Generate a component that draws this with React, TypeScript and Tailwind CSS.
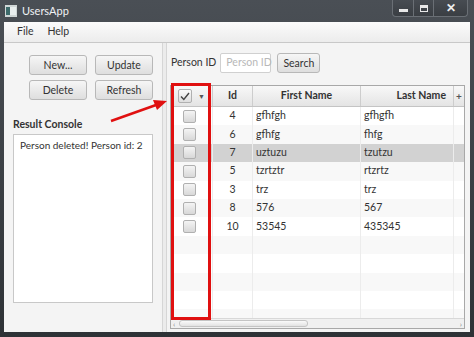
import React from "react";

const rows = [
  { id: "4", first: "gfhfgh", last: "gfhgfh" },
  { id: "6", first: "gfhfg", last: "fhfg" },
  { id: "7", first: "uztuzu", last: "tzutzu", selected: true },
  { id: "5", first: "tzrtztr", last: "rtzrtz" },
  { id: "3", first: "trz", last: "trz" },
  { id: "8", first: "576", last: "567" },
  { id: "10", first: "53545", last: "435345" },
  { id: "", first: "", last: "" },
  { id: "", first: "", last: "" },
  { id: "", first: "", last: "" },
  { id: "", first: "", last: "" },
  { id: "", first: "", last: "" },
];

function FxButton({ label, className = "" }: { label: string; className?: string }) {
  return (
    <button
      className={
        "h-[20px] rounded-[3px] border border-[#b8b8b8] bg-gradient-to-b from-[#f6f6f6] to-[#dedede] text-[10.5px] leading-none text-[#333] " +
        className
      }
    >
      {label}
    </button>
  );
}

function Check() {
  return (
    <div className="h-[13px] w-[13px] rounded-[2px] border border-[#b0b0b0] bg-gradient-to-b from-[#f4f4f4] to-[#d8d8d8]" />
  );
}

export default function App() {
  return (
    <div
      className="relative flex h-[337px] w-[474px] flex-col overflow-hidden bg-gradient-to-b from-[#4a4f55] to-[#2e3236] text-[#333]"
      style={{ fontFamily: 'Lato, "Noto Sans", sans-serif' }}
    >
      {/* title bar */}
      <div className="relative flex h-[22px] items-center pl-[5px]">
        <div className="flex h-[12px] w-[12px] items-center justify-center bg-[#cfd6d6]">
          <div className="h-[8px] w-[4px] bg-[#3c6a6a]" />
          <div className="h-[8px] w-[6px] bg-[#e8eeee]" />
        </div>
        <span className="ml-[5px] text-[11px] text-[#f0f2f4]">UsersApp</span>
        <div className="absolute right-[6px] top-0 flex h-[17px] overflow-hidden rounded-b-[4px] border border-t-0 border-[#6a6f75] bg-gradient-to-b from-[#474c52] to-[#3a3e43]">
          <div className="flex w-[21px] items-center justify-center border-r border-[#6a6f75]">
            <div className="mt-[4px] h-[3px] w-[9px] bg-[#e8e8e8]" />
          </div>
          <div className="flex w-[20px] items-center justify-center border-r border-[#6a6f75]">
            <div className="h-[7px] w-[8px] border border-t-[3px] border-[#e8e8e8]" />
          </div>
          <div className="flex w-[33px] items-center justify-center text-[12px] font-bold leading-none text-[#eeeeee]">
            ✕
          </div>
        </div>
      </div>

      {/* client */}
      <div className="mx-[4px] mb-[5px] flex flex-1 flex-col bg-[#f4f4f4]">
        {/* menu */}
        <div className="flex h-[21px] items-center gap-[14px] border-b border-[#c8c8c8] bg-gradient-to-b from-[#fbfbfb] to-[#ececec] pl-[13px] text-[10.5px]">
          <span>File</span>
          <span>Help</span>
        </div>

        <div className="flex flex-1">
          {/* left */}
          <div className="flex w-[158px] flex-col">
            <div className="ml-[25px] mt-[12px] grid w-[124px] grid-cols-2 gap-x-[8px] gap-y-[5px]">
              <FxButton label="New..." />
              <FxButton label="Update" />
              <FxButton label="Delete" />
              <FxButton label="Refresh" />
            </div>
            <div className="ml-[9px] mt-[17px] text-[10.5px] font-bold leading-[14px]">Result Console</div>
            <div className="ml-[9px] mt-[3px] h-[169px] w-[140px] whitespace-nowrap border border-[#c8c8c8] bg-white px-[6px] pt-[3px] text-[10px]">
              Person deleted! Person id: 2
            </div>
          </div>

          {/* splitter */}
          <div className="w-[5px] border-x border-[#d6d6d6] bg-[#ececec]" />

          {/* right */}
          <div className="flex flex-1 flex-col pl-[3px] pr-[5px]">
            <div className="mt-[10px] flex h-[20px] items-center text-[10.5px]">
              <span className="ml-[1px] whitespace-nowrap">Person ID</span>
              <div className="ml-[4px] flex h-[20px] w-[51px] items-center whitespace-nowrap rounded-[2px] border border-[#d0d0d0] bg-white pl-[5px] text-[#b8b8b8]">
                Person ID
              </div>
              <FxButton label="Search" className="ml-[6px] w-[43px]" />
            </div>

            <div className="mt-[12px] flex h-[244px] flex-col overflow-hidden border border-[#a8a8a8] bg-white">
              {/* header */}
              <div className="flex h-[21px] shrink-0 border-b border-[#c4c4c4] bg-gradient-to-b from-[#f8f8f8] to-[#e4e4e4] text-[10.5px] font-bold">
                <div className="flex w-[42px] items-center border-r border-[#cdcdcd] pl-[7px]">
                  <div className="flex h-[14px] w-[14px] items-center justify-center rounded-[2px] border border-[#b0b0b0] bg-gradient-to-b from-[#fafafa] to-[#dedede]">
                    <svg width="10" height="9" viewBox="0 0 10 9">
                      <path d="M1 4.5 L3.8 7.5 L9 1" fill="none" stroke="#444" strokeWidth="1.4" />
                    </svg>
                  </div>
                  <span className="ml-[6px] text-[7px] text-[#555]">▼</span>
                </div>
                <div className="flex w-[40px] items-center justify-center border-r border-[#cdcdcd]">Id</div>
                <div className="flex w-[108px] items-center justify-center border-r border-[#cdcdcd]">First Name</div>
                <div className="flex w-[93px] items-center justify-end border-r border-[#cdcdcd] pr-[7px]">Last Name</div>
                <div className="flex flex-1 items-center justify-center text-[10px] text-[#555]">+</div>
              </div>

              {/* rows */}
              <div className="flex-1 overflow-hidden text-[10.5px]">
                {rows.map((r, i) => (
                  <div
                    key={i}
                    className={
                      "flex h-[18.4px] " +
                      (r.selected ? "bg-[#d2d2d2]" : i % 2 === 1 ? "bg-[#f8f8f8]" : "bg-white")
                    }
                  >
                    <div className="flex w-[42px] items-center border-r border-[#ececec] pl-[12px]">
                      {r.id && <Check />}
                    </div>
                    <div className="flex w-[40px] items-center justify-center border-r border-[#ececec]">{r.id}</div>
                    <div className="flex w-[108px] items-center border-r border-[#ececec] pl-[3px]">{r.first}</div>
                    <div className="flex w-[93px] items-center border-r border-[#ececec] pl-[3px]">{r.last}</div>
                    <div className="flex-1" />
                  </div>
                ))}
              </div>

              {/* horizontal scrollbar */}
              <div className="flex h-[10px] shrink-0 items-center border-t border-[#d8d8d8] bg-[#f0f0f0] px-[2px]">
                <span className="text-[8px] leading-none text-[#888]">‹</span>
                <div className="ml-[4px] h-[7px] w-[129px] rounded-[3px] border border-[#c4c4c4] bg-gradient-to-b from-[#fafafa] to-[#e2e2e2]" />
                <span className="ml-auto text-[8px] leading-none text-[#888]">›</span>
              </div>
            </div>
          </div>
        </div>
      </div>

      {/* annotation: red frame around checkbox column */}
      <div className="absolute left-[171px] top-[83px] h-[237px] w-[40px] border-[3px] border-[#e01010]" />
      {/* annotation: red arrow */}
      <svg className="absolute left-0 top-0" width="474" height="337" viewBox="0 0 474 337">
        <line x1="111" y1="121" x2="156" y2="105" stroke="#e01010" strokeWidth="2.5" />
        <path d="M167 101 L153 100 L157 110 Z" fill="#e01010" />
      </svg>
    </div>
  );
}
